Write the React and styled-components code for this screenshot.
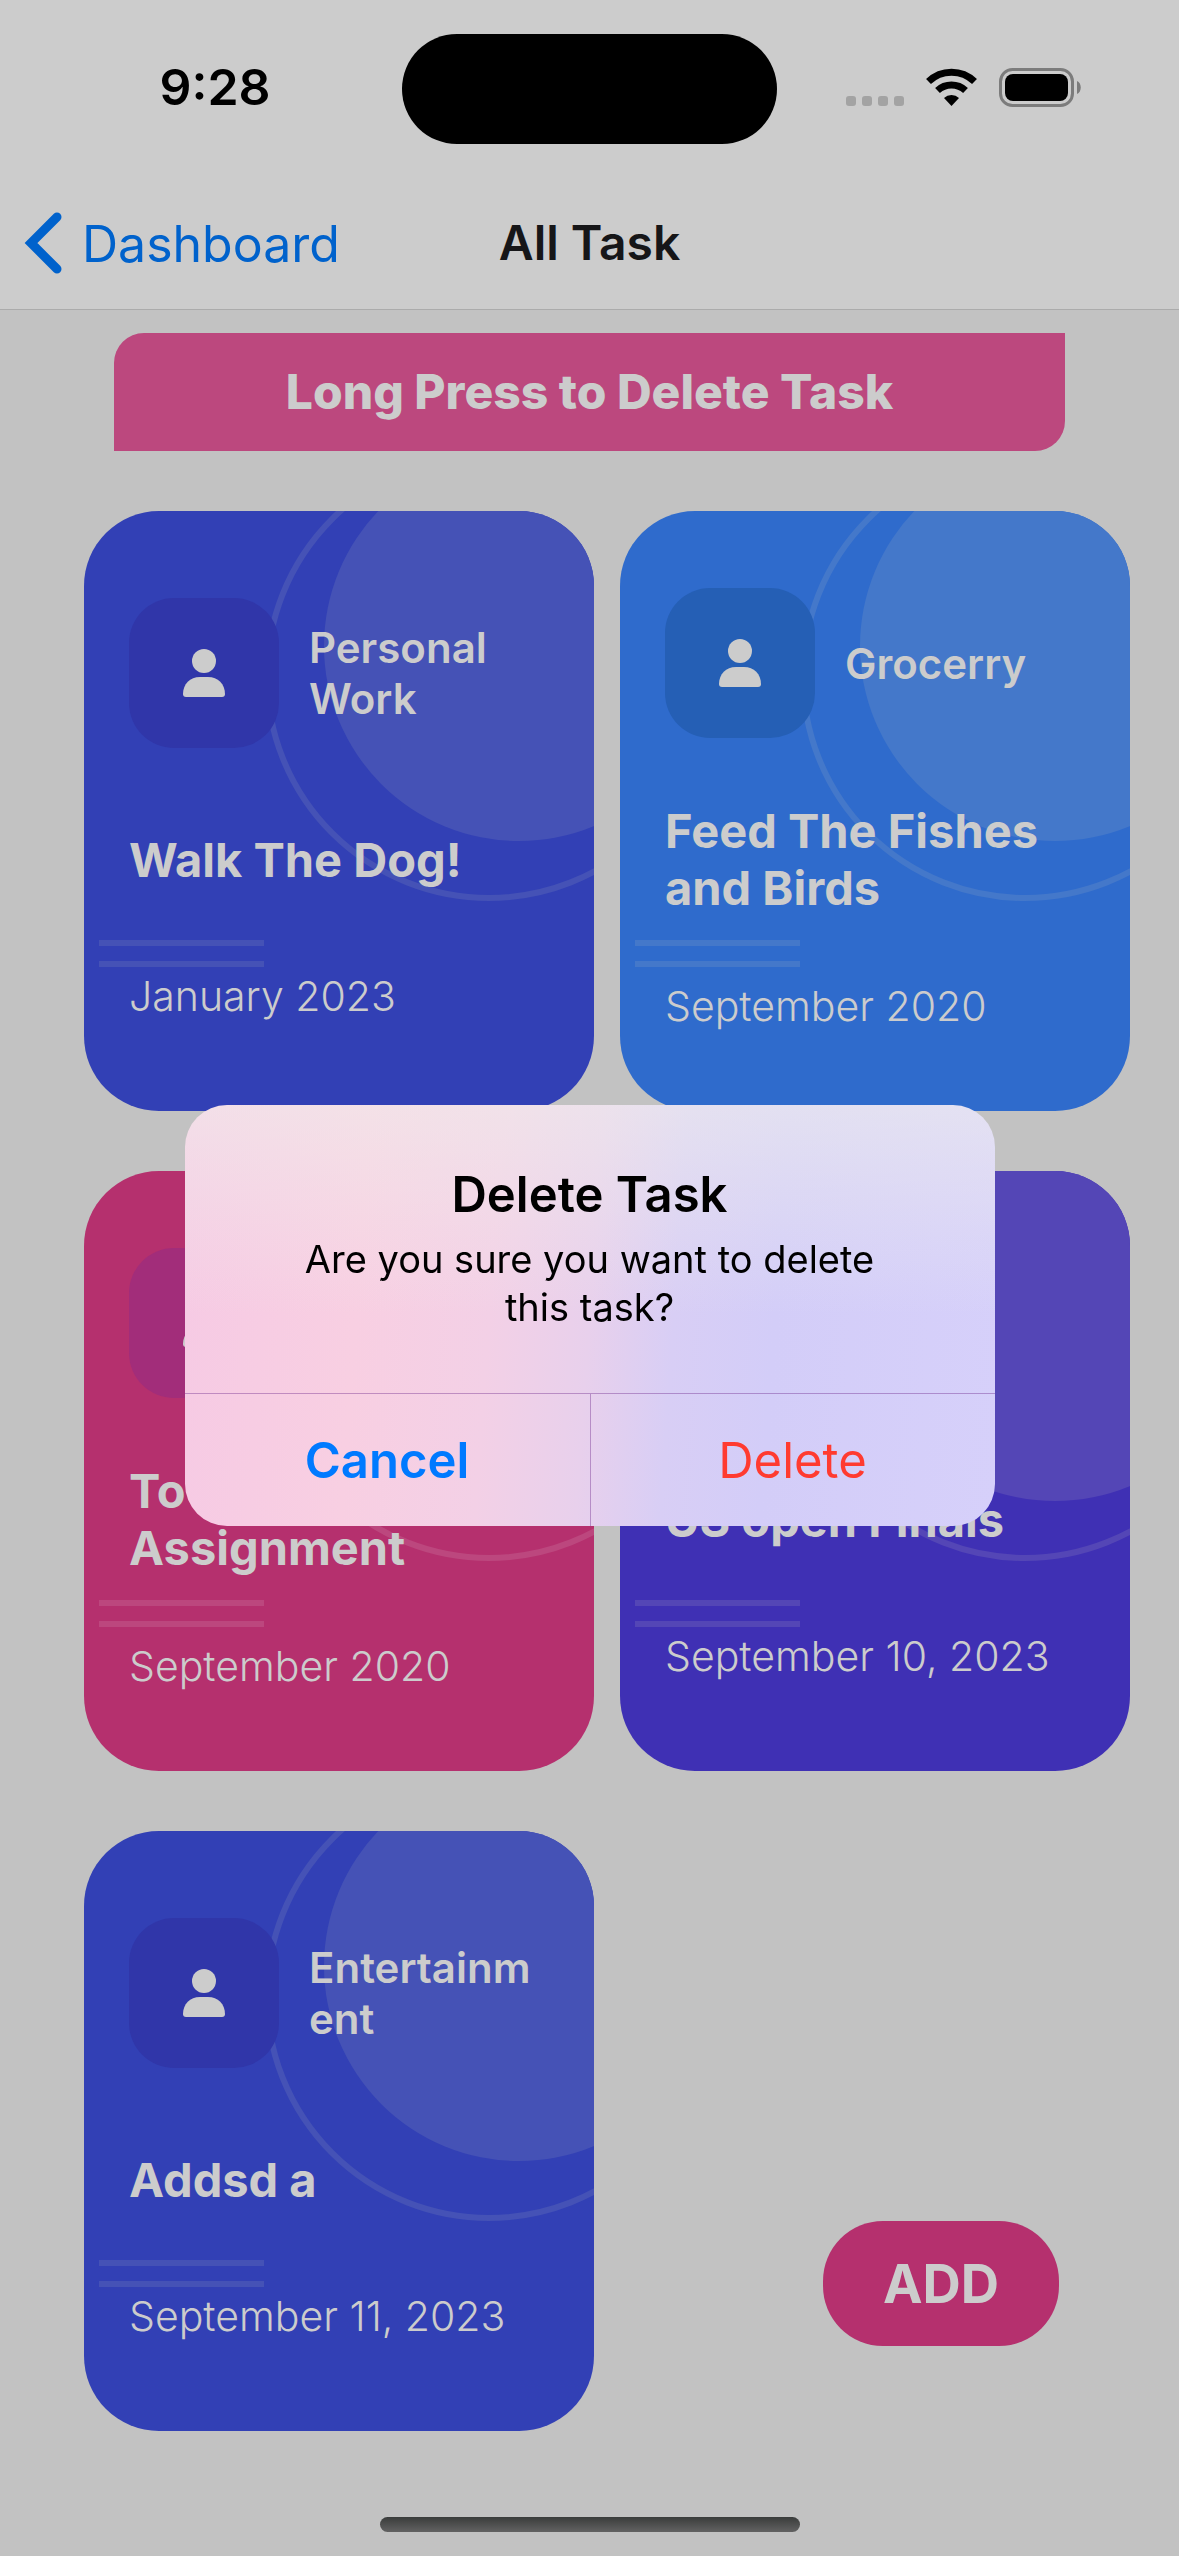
import React from "react";
import styled, { createGlobalStyle } from "styled-components";

const GlobalStyle = createGlobalStyle`
  *, *::before, *::after { box-sizing: border-box; }
  body {
    margin: 0;
    background: #c2c2c2;
    font-family: Inter, "Liberation Sans", sans-serif;
    color: #cccccc;
  }
  h1, h2, p { margin: 0; }
  button { border: 0; padding: 0; background: none; font-family: inherit; cursor: pointer; }
`;

const Screen = styled.div`
  display: flex;
  flex-direction: column;
  min-height: 100vh;
`;

const Header = styled.header`
  background: #cccccc;
  border-bottom: 1px solid #ababab;
`;

const StatusBar = styled.div`
  display: grid;
  grid-template-columns: 1fr 375px 1fr;
  align-items: center;
  height: 178px;
`;

const Clock = styled.time`
  justify-self: center;
  padding: 0 0 4px 28px;
  font-size: 50px;
  line-height: 60px;
  font-weight: 600;
  color: #000;
`;

const Island = styled.div`
  height: 110px;
  border-radius: 55px;
  background: #000;
`;

const StatusIcons = styled.div`
  justify-self: end;
  display: flex;
  align-items: center;
  gap: 22px;
  padding: 0 98px 4px 0;
  svg { display: block; }
`;

const NavBar = styled.nav`
  display: grid;
  grid-template-columns: 1fr auto 1fr;
  align-items: center;
  height: 131px;
`;

const BackLink = styled.a`
  display: flex;
  align-items: center;
  gap: 20px;
  padding-left: 24px;
  font-size: 50px;
  line-height: 60px;
  color: #0062cc;
  text-decoration: none;
`;

const NavTitle = styled.h1`
  padding-bottom: 2px;
  font-size: 48px;
  line-height: 60px;
  font-weight: 600;
  color: #161618;
`;

const Content = styled.main`
  display: flex;
  flex-direction: column;
  gap: 60px;
  padding: 23px 49px 120px 84px;
`;

const Banner = styled.p`
  margin: 0 65px 0 30px;
  padding: 30px;
  border-radius: 30px 0;
  background: #bc487e;
  font-size: 48px;
  line-height: 58px;
  font-weight: 800;
  text-align: center;
`;

const TaskGrid = styled.section`
  display: grid;
  grid-template-columns: 1fr 1fr;
  gap: 60px 26px;
`;

const Card = styled.article`
  position: relative;
  overflow: hidden;
  display: flex;
  flex-direction: column;
  justify-content: space-around;
  height: 600px;
  padding: 45px 45px 48px;
  border-radius: 75px;
  background: ${(p) => p.$tone.base};
`;

const Disc = styled.span`
  position: absolute;
  top: -60px;
  right: -120px;
  width: 390px;
  height: 390px;
  border-radius: 50%;
  background: ${(p) => p.$tone.light};
`;

const Ring = styled.span`
  position: absolute;
  top: -60px;
  right: -120px;
  width: 450px;
  height: 450px;
  border: 6px solid ${(p) => p.$tone.light};
  border-radius: 50%;
`;

const Stripes = styled.span`
  position: absolute;
  left: 15px;
  bottom: 144px;
  width: 165px;
  height: 27px;
  border: solid ${(p) => p.$tone.light};
  border-width: 6px 0;
`;

const CardHead = styled.div`
  position: relative;
  display: flex;
  align-items: center;
  gap: 30px;
`;

const IconTile = styled.div`
  flex: none;
  display: grid;
  place-items: center;
  width: 150px;
  height: 150px;
  border-radius: 45px;
  background: ${(p) => p.$tone.tile};
`;

const Category = styled.p`
  flex: 1;
  min-width: 0;
  font-size: 42px;
  line-height: 51px;
  font-weight: 600;
  overflow-wrap: anywhere;
`;

const CardTitle = styled.h2`
  position: relative;
  font-size: 47px;
  line-height: 57px;
  font-weight: 700;
`;

const CardDate = styled.time`
  position: relative;
  font-size: 41px;
  line-height: 50px;
  font-weight: 300;
`;

const AddButton = styled.button`
  position: fixed;
  right: 120px;
  bottom: 210px;
  width: 236px;
  height: 125px;
  border-radius: 60px;
  background: #b5306e;
  color: #cccccc;
  font-size: 53px;
  line-height: 64px;
  font-weight: 700;
`;

const HomeIndicator = styled.div`
  position: fixed;
  left: 50%;
  bottom: 24px;
  width: 420px;
  height: 15px;
  margin-left: -210px;
  border-radius: 8px;
  background: linear-gradient(#3a3c3b, #626262);
`;

const Overlay = styled.div`
  position: fixed;
  inset: 0;
  display: grid;
  place-items: center;
  padding: 177px 0 102px;
`;

const Alert = styled.div`
  width: 810px;
  overflow: hidden;
  border-radius: 42px;
  color: #000;
  text-align: center;
  background:
    linear-gradient(rgba(240, 240, 236, 0.55), rgba(240, 240, 236, 0) 50%),
    linear-gradient(94deg, #f6cae4 0%, #f8cfe2 22%, #f3d0e6 38%, #e8d0ec 50%, #d8cef5 60%, #d3cdf8 72%, #d6d0fa 100%);
`;

const AlertBody = styled.div`
  padding: 60px 60px 62px;
`;

const AlertTitle = styled.h2`
  font-size: 49px;
  line-height: 60px;
  font-weight: 600;
`;

const AlertText = styled.p`
  padding: 10px 48px 0;
  font-size: 38px;
  line-height: 48px;
`;

const AlertActions = styled.div`
  display: grid;
  grid-template-columns: 1fr 1fr;
  border-top: 1px solid rgba(110, 40, 140, 0.4);
`;

const AlertButton = styled.button`
  height: 132px;
  padding-top: 2px;
  font-size: 49px;
  line-height: 60px;
  font-weight: ${(p) => (p.$danger ? 400 : 600)};
  color: ${(p) => (p.$danger ? "#ff3b30" : "#007aff")};
  & + & { border-left: 1px solid rgba(110, 40, 140, 0.4); }
`;

const tones = {
  indigo: { base: "#3240b5", light: "#4552b6", tile: "#3036a9" },
  blue: { base: "#2f6bcc", light: "#4478ca", tile: "#255fb5" },
  pink: { base: "#b5306e", light: "#bc477e", tile: "#a22d7a" },
  violet: { base: "#3f30b4", light: "#5446b6", tile: "#382ba3" },
};

const tasks = [
  { tone: tones.indigo, category: "Personal Work", title: "Walk The Dog!", date: "January 2023" },
  { tone: tones.blue, category: "Grocerry", title: "Feed The Fishes and Birds", date: "September 2020" },
  { tone: tones.pink, title: "To Submit Assignment", date: "September 2020" },
  { tone: tones.violet, title: "US open Finals", date: "September 10, 2023" },
  { tone: tones.indigo, category: "Entertainment", title: "Addsd a", date: "September 11, 2023" },
];

function PersonIcon() {
  return (
    <svg width="42" height="48" viewBox="0 0 42 48" fill="#cccccc" aria-hidden="true">
      <circle cx="21" cy="12" r="12" />
      <path d="M0 45C0 35 7 28 17 28h8c10 0 17 7 17 17 0 2-1 3-3 3H3c-2 0-3-1-3-3z" />
    </svg>
  );
}

function SignalDots() {
  return (
    <svg width="58" height="38" viewBox="0 0 58 38" fill="#a3a3a3" aria-hidden="true">
      {[0, 16, 32, 48].map((x) => (
        <rect key={x} x={x} y="28" width="10" height="10" rx="3" />
      ))}
    </svg>
  );
}

function WifiIcon() {
  return (
    <svg width="51" height="38" viewBox="0 0 51 38" aria-hidden="true">
      <g fill="none" stroke="#000" strokeWidth="7">
        <path d="M2.500 13.500a33 33 0 0 1 46 0" />
        <path d="M11.500 22.500a20.500 20.500 0 0 1 28 0" />
      </g>
      <path d="M25.500 38l-7.500-8a11 11 0 0 1 15 0z" fill="#000" />
    </svg>
  );
}

function BatteryIcon() {
  return (
    <svg width="82" height="39" viewBox="0 0 82 39" aria-hidden="true">
      <rect x="1.500" y="1.500" width="72" height="36" rx="12" fill="none" stroke="#7c7c7c" strokeWidth="3" />
      <rect x="6" y="6" width="63" height="27" rx="8" fill="#000" />
      <path d="M78 13c5 2 5 11 0 13z" fill="#7c7c7c" />
    </svg>
  );
}

function TaskCard({ task }) {
  return (
    <Card $tone={task.tone}>
      <Disc $tone={task.tone} />
      <Ring $tone={task.tone} />
      <Stripes $tone={task.tone} />
      <CardHead>
        <IconTile $tone={task.tone}>
          <PersonIcon />
        </IconTile>
        {task.category && <Category>{task.category}</Category>}
      </CardHead>
      <CardTitle>{task.title}</CardTitle>
      <CardDate>{task.date}</CardDate>
    </Card>
  );
}

export default function App() {
  return (
    <Screen>
      <GlobalStyle />
      <Header>
        <StatusBar>
          <Clock>9:28</Clock>
          <Island />
          <StatusIcons>
            <SignalDots />
            <WifiIcon />
            <BatteryIcon />
          </StatusIcons>
        </StatusBar>
        <NavBar>
          <BackLink href="#dashboard">
            <svg width="38" height="64" viewBox="0 0 38 64" fill="none" stroke="#0062cc" strokeWidth="9" strokeLinecap="round" aria-hidden="true">
              <path d="M33 5L7 31l26 26" />
            </svg>
            Dashboard
          </BackLink>
          <NavTitle>All Task</NavTitle>
        </NavBar>
      </Header>
      <Content>
        <Banner>Long Press to Delete Task</Banner>
        <TaskGrid>
          {tasks.map((task) => (
            <TaskCard key={task.title} task={task} />
          ))}
        </TaskGrid>
      </Content>
      <AddButton type="button">ADD</AddButton>
      <HomeIndicator />
      <Overlay>
        <Alert role="alertdialog" aria-modal="true" aria-labelledby="alert-title" aria-describedby="alert-text">
          <AlertBody>
            <AlertTitle id="alert-title">Delete Task</AlertTitle>
            <AlertText id="alert-text">Are you sure you want to delete this task?</AlertText>
          </AlertBody>
          <AlertActions>
            <AlertButton type="button">Cancel</AlertButton>
            <AlertButton type="button" $danger>Delete</AlertButton>
          </AlertActions>
        </Alert>
      </Overlay>
    </Screen>
  );
}
